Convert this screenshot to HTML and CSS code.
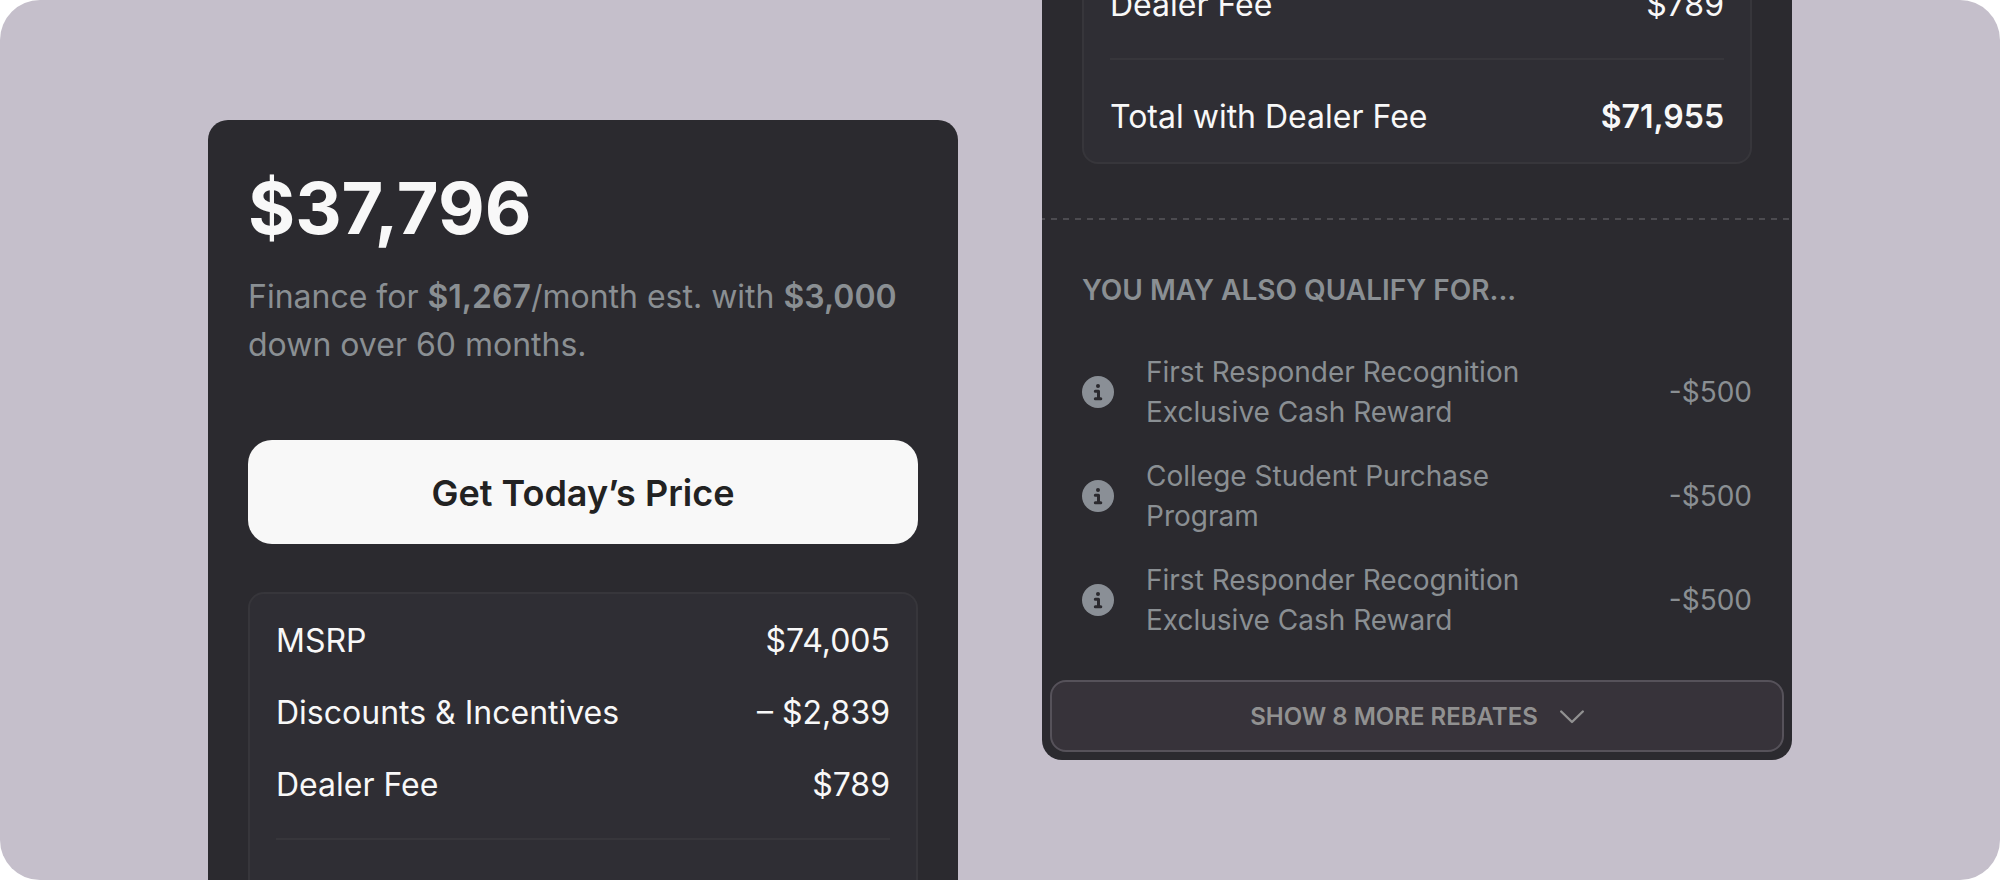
FILE: index.html
```html
<!DOCTYPE html>
<html lang="en">
<head>
    <meta charset="UTF-8">
    <meta name="viewport" content="width=device-width, initial-scale=1.0">
    <title>Vehicle Price</title>
    <link rel="stylesheet" href="styles.css">
</head>
<body>
    <main class="stage">
        <section class="card card-price">
            <h1 class="price">$37,796</h1>
            <p class="finance">Finance for <b>$1,267</b>/month est. with <b>$3,000</b> down over 60 months.</p>
            <button class="cta" type="button">Get Today’s Price</button>
            <div class="breakdown">
                <table class="fees">
                    <tbody>
                        <tr><th scope="row">MSRP</th><td>$74,005</td></tr>
                        <tr><th scope="row">Discounts &amp; Incentives</th><td>– $2,839</td></tr>
                        <tr><th scope="row">Dealer Fee</th><td>$789</td></tr>
                    </tbody>
                </table>
            </div>
        </section>

        <section class="card card-rebates">
            <div class="breakdown">
                <table class="fees">
                    <tbody>
                        <tr><th scope="row">Dealer Fee</th><td>$789</td></tr>
                    </tbody>
                    <tfoot>
                        <tr><th scope="row">Total with Dealer Fee</th><td>$71,955</td></tr>
                    </tfoot>
                </table>
            </div>
            <div class="divider"></div>
            <h2 class="heading">YOU MAY ALSO QUALIFY FOR...</h2>
            <ul class="rebates">
                <li class="rebate">
                    <svg class="info" viewBox="0 0 32 32" aria-hidden="true">
                        <circle class="info-disc" cx="16" cy="16" r="16"/>
                        <circle class="info-dot" cx="16" cy="10" r="2"/>
                        <path class="info-stem" d="M13.3 15.2H16.5V22.7M13.3 22.7H18.8"/>
                    </svg>
                    <span class="rebate-name">First Responder Recognition Exclusive Cash Reward</span>
                    <span class="rebate-amount">-$500</span>
                </li>
                <li class="rebate">
                    <svg class="info" viewBox="0 0 32 32" aria-hidden="true">
                        <circle class="info-disc" cx="16" cy="16" r="16"/>
                        <circle class="info-dot" cx="16" cy="10" r="2"/>
                        <path class="info-stem" d="M13.3 15.2H16.5V22.7M13.3 22.7H18.8"/>
                    </svg>
                    <span class="rebate-name">College Student Purchase Program</span>
                    <span class="rebate-amount">-$500</span>
                </li>
                <li class="rebate">
                    <svg class="info" viewBox="0 0 32 32" aria-hidden="true">
                        <circle class="info-disc" cx="16" cy="16" r="16"/>
                        <circle class="info-dot" cx="16" cy="10" r="2"/>
                        <path class="info-stem" d="M13.3 15.2H16.5V22.7M13.3 22.7H18.8"/>
                    </svg>
                    <span class="rebate-name">First Responder Recognition Exclusive Cash Reward</span>
                    <span class="rebate-amount">-$500</span>
                </li>
            </ul>
            <button class="more" type="button">
                SHOW 8 MORE REBATES
                <svg class="chevron" viewBox="0 0 24 24" aria-hidden="true">
                    <path d="M1.2 7.5L12 18L22.8 7.5"/>
                </svg>
            </button>
        </section>
    </main>
</body>
</html>
```

FILE: styles.css
```css
* {
    box-sizing: border-box;
}
body {
    margin: 0;
    background-color: #fff;
    font-family: Inter, Arial, sans-serif;
    font-optical-sizing: none;
}
.stage {
    display: grid;
    grid-template-columns: 1fr 1fr;
    grid-template-rows: minmax(0, 1fr);
    gap: 84px;
    height: 100vh;
    padding: 0 208px;
    background-color: #c5bfcb;
    border-radius: 40px;
    overflow: hidden;
}
.card {
    display: flex;
    flex-direction: column;
    background-color: #2b2a2f;
    color: #f8f8f8;
}
.card-price {
    margin-top: 120px;
    padding: 40px 40px 0;
    border-radius: 20px 20px 0 0;
}
.card-rebates {
    align-self: end;
    margin-bottom: 120px;
    padding: 40px 0 8px;
    border-radius: 20px;
}
.price {
    margin: 0 0 17px;
    font-size: 72px;
    line-height: 96px;
    font-weight: 700;
}
.finance {
    margin: 0 0 71px;
    font-size: 32px;
    line-height: 48px;
    font-weight: 400;
    color: #8a8f93;
}
.finance b {
    font-weight: 600;
}
.cta {
    height: 104px;
    margin-bottom: 48px;
    padding: 2px 24px 0;
    border: 0;
    border-radius: 24px;
    background-color: #f8f8f8;
    color: #222;
    font-family: inherit;
    font-size: 36px;
    font-weight: 600;
    cursor: pointer;
}
.breakdown {
    padding: 11px 26px 9px;
    border: 2px solid #37363b;
    border-radius: 16px;
    background-color: #2f2e34;
}
.card-price .breakdown {
    flex: 1;
    border-bottom: 0;
    border-radius: 16px 16px 0 0;
}
.card-rebates .breakdown {
    margin: 0 40px;
}
.fees {
    width: 100%;
    border-spacing: 0;
    font-size: 32px;
    line-height: 48px;
}
.fees th,
.fees td {
    padding: 12px 0;
    font-weight: 400;
    text-align: left;
}
.fees td {
    text-align: right;
}
.fees tbody tr:last-child > * {
    padding-bottom: 29px;
    border-bottom: 2px solid #37363b;
}
.fees tfoot tr > * {
    padding-top: 33px;
}
.fees tfoot td {
    font-weight: 600;
}
.divider {
    height: 2px;
    margin: 54px 0 50px;
    background: repeating-linear-gradient(90deg, #4c4b50 0 3px, transparent 3px 9px, #4c4b50 9px 12px);
}
.heading {
    margin: 0 40px 42px;
    font-size: 28px;
    line-height: 40px;
    font-weight: 600;
    color: #8a8f93;
}
.rebates {
    display: flex;
    flex-direction: column;
    gap: 24px;
    margin: 0 40px 40px;
    padding: 0;
    list-style: none;
}
.rebate {
    display: flex;
    align-items: center;
    font-size: 28px;
    line-height: 40px;
    font-weight: 400;
    color: #8a8f93;
}
.info {
    flex: none;
    width: 32px;
    height: 32px;
    margin-right: 32px;
}
.info-disc {
    fill: #8a8f96;
}
.info-dot {
    fill: #2b2a2f;
}
.info-stem {
    fill: none;
    stroke: #2b2a2f;
    stroke-width: 3;
    stroke-linecap: round;
    stroke-linejoin: round;
}
.rebate-name {
    max-width: 400px;
}
.rebate-amount {
    margin-left: auto;
}
.more {
    display: flex;
    justify-content: center;
    align-items: center;
    gap: 22px;
    height: 72px;
    margin: 0 8px;
    border: 2px solid #56525a;
    border-radius: 16px;
    background-color: #37333a;
    color: #919191;
    font-family: inherit;
    font-size: 24px;
    font-weight: 600;
    cursor: pointer;
}
.chevron {
    width: 24px;
    height: 24px;
    fill: none;
    stroke: #919191;
    stroke-width: 2.4;
    stroke-linecap: round;
    stroke-linejoin: round;
}
```
